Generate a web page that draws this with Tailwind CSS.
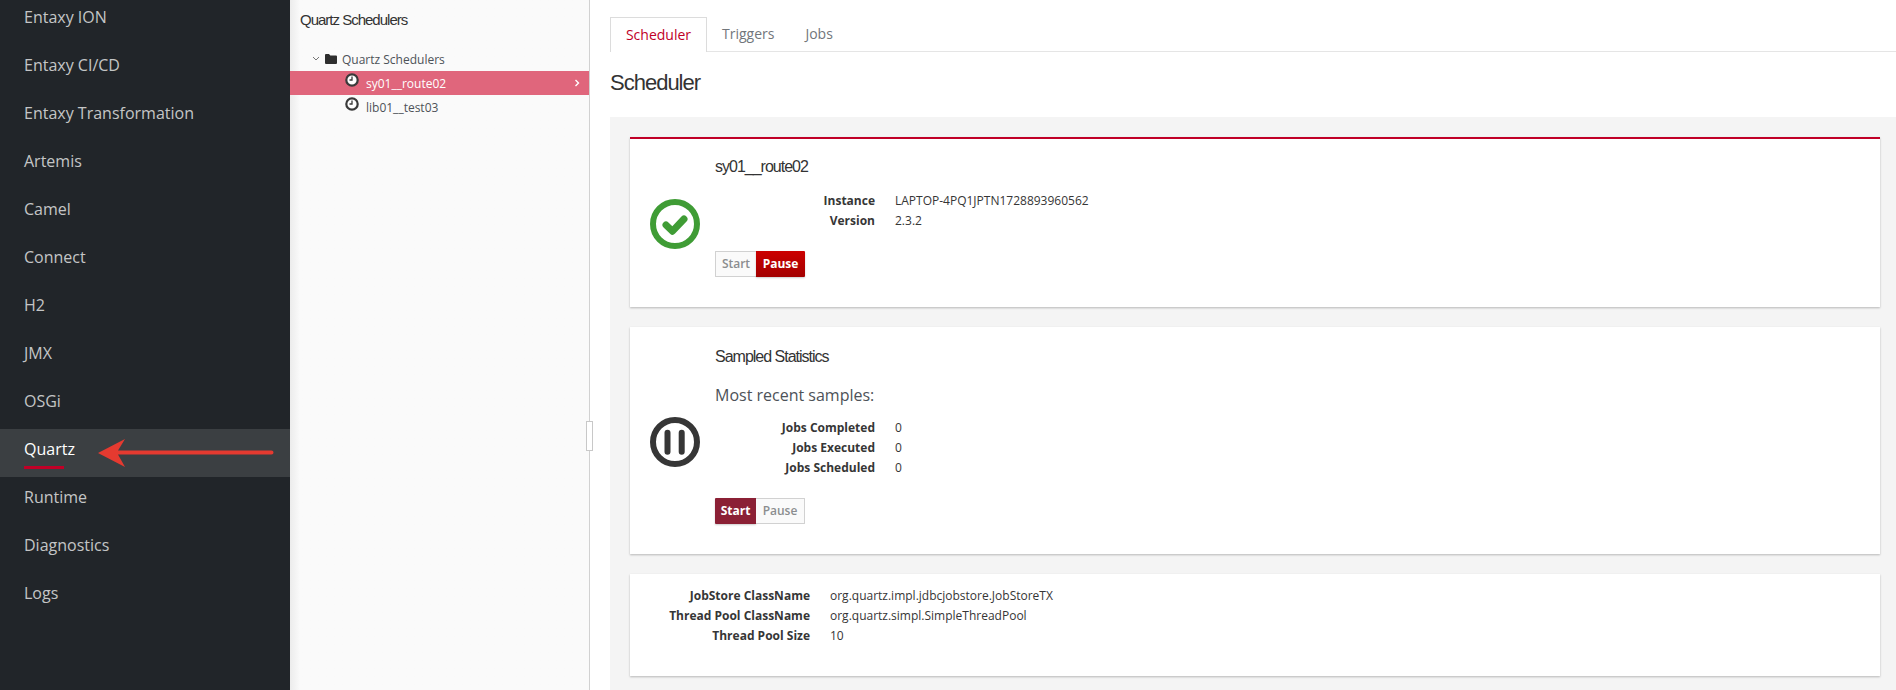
<!DOCTYPE html>
<html lang="en">
<head>
    <meta charset="UTF-8">
    <title>Quartz</title>
    <script src="https://cdn.jsdelivr.net/npm/@tailwindcss/browser@4"></script>
</head>
<body class="bg-white overflow-hidden">
    <div class="flex h-[690px] w-[1896px] overflow-hidden font-['Open_Sans',sans-serif] text-[12px] text-[#363636]">
        <!-- Sidebar -->
        <nav class="w-[290px] shrink-0 bg-[#212529] text-[16px] text-[#c4c5c6]">
            <div class="mt-[-3px] flex flex-col">
                <a class="h-12 pl-6 pt-[8px] leading-6">Entaxy ION</a>
                <a class="h-12 pl-6 pt-[8px] leading-6">Entaxy CI/CD</a>
                <a class="h-12 pl-6 pt-[8px] leading-6">Entaxy Transformation</a>
                <a class="h-12 pl-6 pt-[8px] leading-6">Artemis</a>
                <a class="h-12 pl-6 pt-[8px] leading-6">Camel</a>
                <a class="h-12 pl-6 pt-[8px] leading-6">Connect</a>
                <a class="h-12 pl-6 pt-[8px] leading-6">H2</a>
                <a class="h-12 pl-6 pt-[8px] leading-6">JMX</a>
                <a class="h-12 pl-6 pt-[8px] leading-6">OSGi</a>
                <a class="relative h-12 bg-[#3b3f42] pl-6 pt-[8px] leading-6 text-white">
                    <span class="block w-10 whitespace-nowrap">Quartz</span>
                    <span class="mt-[5px] block h-[3px] w-10 bg-[#c00027]"></span>
                    <!-- annotation arrow -->
                    <svg class="absolute left-[98px] top-[10px]" width="176" height="28" viewBox="0 0 176 28">
                        <path d="M0 14 L27 0 L20 11.5 H173.5 a2 2 0 0 1 0 4 H20 L27 28 Z" fill="#e53a30"/>
                    </svg>
                </a>
                <a class="h-12 pl-6 pt-[8px] leading-6">Runtime</a>
                <a class="h-12 pl-6 pt-[8px] leading-6">Diagnostics</a>
                <a class="h-12 pl-6 pt-[8px] leading-6">Logs</a>
            </div>
        </nav>

        <!-- Tree panel -->
        <aside class="relative w-[300px] shrink-0 border-r border-[#d1d1d1] bg-[#fafafa] bg-gradient-to-r from-[#ececec] to-[#fafafa] to-[10px]">
            <h2 class="pl-[10px] pt-[11px] font-['Liberation_Sans',sans-serif] text-[15px] leading-[18px] tracking-[-1px] text-[#333]">Quartz Schedulers</h2>
            <div class="mt-[18px] flex h-6 items-center pl-[22px] text-[#4d5258]">
                <svg width="8" height="6" viewBox="0 0 8 6" fill="none" stroke="#777" stroke-width="1"><path d="M1 1 L4 4 L7 1"/></svg>
                <svg class="ml-[5px]" width="12" height="10" viewBox="0 0 12 10" fill="#2e2e2e"><path d="M0 1 a1 1 0 0 1 1-1 h3 l1.3 1.4 H11 a1 1 0 0 1 1 1 V9 a1 1 0 0 1-1 1 H1 a1 1 0 0 1-1-1 Z"/></svg>
                <span class="ml-[5px] pt-px">Quartz Schedulers</span>
            </div>
            <div class="flex h-6 items-center bg-[#e0667c] pl-[55px] pr-[9px] text-white">
                <svg class="mt-[-7px]" width="14" height="14" viewBox="0 0 14 14" fill="none"><circle cx="7" cy="7" r="5.7" fill="#fff" stroke="#3a3a3a" stroke-width="2.2"/><path d="M7 3.5 V7 H4.5" stroke="#3a3a3a" stroke-width="1.3"/></svg>
                <span class="ml-[7px] flex-1 pt-px">sy01__route02</span>
                <svg width="6" height="8" viewBox="0 0 6 8" fill="none" stroke="#fff" stroke-width="1.4"><path d="M1.5 1 L4.5 4 L1.5 7"/></svg>
            </div>
            <div class="flex h-6 items-center pl-[55px] text-[#4d5258]">
                <svg class="mt-[-7px]" width="14" height="14" viewBox="0 0 14 14" fill="none"><circle cx="7" cy="7" r="5.7" fill="#fff" stroke="#3a3a3a" stroke-width="2.2"/><path d="M7 3.5 V7 H4.5" stroke="#3a3a3a" stroke-width="1.3"/></svg>
                <span class="ml-[7px] pt-px">lib01__test03</span>
            </div>
            <div class="absolute left-[296px] top-[421px] h-[30px] w-[7px] border border-[#c8c8c8] bg-white"></div>
        </aside>

        <!-- Main -->
        <main class="min-w-0 flex-1 pl-5 pt-[17px]">
            <div class="flex h-[35px] items-stretch border-b border-[#e5e5e5] text-[14px] text-[#72767b]">
                <div class="h-[35px] w-[97px] border border-b-0 border-[#dcdcdc] bg-white pt-[7px] text-center leading-5 text-[#c00027]">Scheduler</div>
                <div class="pl-[15px] pt-[7px] leading-5">Triggers</div>
                <div class="pl-[31px] pt-[7px] leading-5">Jobs</div>
            </div>
            <h1 class="pt-[17px] font-['Liberation_Sans',sans-serif] text-[22px] leading-[28px] tracking-[-1px] text-[#333]">Scheduler</h1>

            <section class="mt-[20px] flex h-[573px] flex-col gap-5 bg-[#f4f4f4] py-5 pl-5 pr-4">
                <!-- Scheduler card -->
                <div class="flex h-[170px] shrink-0 border-t-2 border-[#c00027] bg-white shadow-[0_1px_2px_rgba(0,0,0,0.25)]">
                    <div class="flex w-[85px] shrink-0 items-center justify-center pl-[5px] pt-[1px]">
                        <svg width="50" height="50" viewBox="0 0 50 50" fill="none"><circle cx="25" cy="25" r="22" stroke="#3f9c35" stroke-width="6"/><path d="M16 26 L22.5 32.2 L34 20" stroke="#3f9c35" stroke-width="7" stroke-linecap="round" stroke-linejoin="round"/></svg>
                    </div>
                    <div>
                        <h3 class="pt-[18px] font-['Liberation_Sans',sans-serif] text-[16px] leading-[20px] tracking-[-1px] text-[#333]">sy01__route02</h3>
                        <dl class="mt-[14px] grid grid-cols-[160px_auto] gap-x-5 leading-5">
                            <dt class="text-right font-bold">Instance</dt><dd>LAPTOP-4PQ1JPTN1728893960562</dd>
                            <dt class="text-right font-bold">Version</dt><dd>2.3.2</dd>
                        </dl>
                        <div class="mt-[20px] flex h-[26px] font-semibold">
                            <button class="w-[41px] rounded-l-[1px] border border-r-0 border-[#d1d1d1] bg-[#fafafa] text-[#8b8d8f]">Start</button>
                            <button class="w-[49px] rounded-r-[1px] bg-gradient-to-b from-[#cc0000] to-[#a30000] font-bold text-white shadow-[0_1px_2px_rgba(0,0,0,0.2)]">Pause</button>
                        </div>
                    </div>
                </div>

                <!-- Sampled statistics card -->
                <div class="flex h-[227px] shrink-0 bg-white shadow-[0_1px_2px_rgba(0,0,0,0.25)]">
                    <div class="flex w-[85px] shrink-0 items-center justify-center pl-[5px] pt-[3px]">
                        <svg width="50" height="50" viewBox="0 0 50 50" fill="none"><circle cx="25" cy="25" r="22" stroke="#363636" stroke-width="6"/><path d="M17.5 15.7 V34.7 M31.7 15.7 V34.7" stroke="#363636" stroke-width="6" stroke-linecap="round"/></svg>
                    </div>
                    <div>
                        <h3 class="pt-[20px] font-['Liberation_Sans',sans-serif] text-[16px] leading-[20px] tracking-[-1px] text-[#333]">Sampled Statistics</h3>
                        <p class="mt-[16px] text-[16px] leading-[24px] text-[#4d5258]">Most recent samples:</p>
                        <dl class="mt-[11px] grid grid-cols-[160px_auto] gap-x-5 leading-5">
                            <dt class="text-right font-bold">Jobs Completed</dt><dd>0</dd>
                            <dt class="text-right font-bold">Jobs Executed</dt><dd>0</dd>
                            <dt class="text-right font-bold">Jobs Scheduled</dt><dd>0</dd>
                        </dl>
                        <div class="mt-[20px] flex h-[26px] font-semibold">
                            <button class="w-[41px] rounded-l-[1px] bg-[#8b2035] font-bold text-white shadow-[0_1px_2px_rgba(0,0,0,0.2)]">Start</button>
                            <button class="w-[49px] rounded-r-[1px] border border-l-0 border-[#d1d1d1] bg-[#fafafa] text-[#8b8d8f]">Pause</button>
                        </div>
                    </div>
                </div>

                <!-- Config card -->
                <div class="h-[102px] shrink-0 bg-white pt-[12px] shadow-[0_1px_2px_rgba(0,0,0,0.25)]">
                    <dl class="grid grid-cols-[180px_auto] gap-x-5 leading-5">
                        <dt class="text-right font-bold">JobStore ClassName</dt><dd>org.quartz.impl.jdbcjobstore.JobStoreTX</dd>
                        <dt class="text-right font-bold">Thread Pool ClassName</dt><dd>org.quartz.simpl.SimpleThreadPool</dd>
                        <dt class="text-right font-bold">Thread Pool Size</dt><dd>10</dd>
                    </dl>
                </div>
            </section>
        </main>
    </div>
</body>
</html>
